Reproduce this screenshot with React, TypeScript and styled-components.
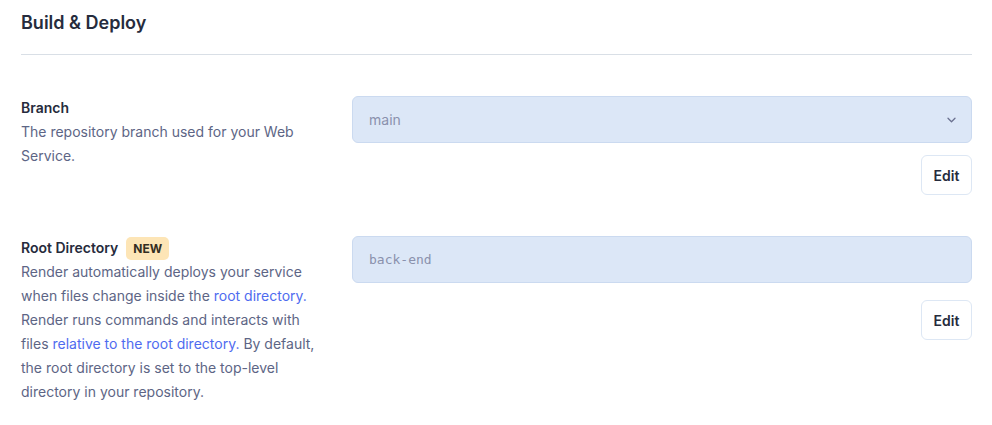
import React from "react";
import styled, { createGlobalStyle } from "styled-components";

const Global = createGlobalStyle`
  html, body { margin: 0; padding: 0; background: #ffffff; }
  body { font-family: Inter, "Noto Sans", sans-serif; -webkit-font-smoothing: antialiased; }
`;

const Page = styled.div`
  padding: 11px 20px 20px 21px;
`;

const Header = styled.div`
  padding-bottom: 19px;
  border-bottom: 1px solid #d9dfe6;
`;

const Title = styled.h2`
  margin: 0;
  font-size: 18px;
  line-height: 24px;
  font-weight: 600;
  color: #262c3d;
`;

const Sections = styled.div`
  display: flex;
  flex-direction: column;
  gap: 41px;
  padding-top: 41px;
`;

const Section = styled.section`
  display: grid;
  grid-template-columns: 310px 1fr;
  column-gap: 21px;
  align-items: start;
`;

const Info = styled.div`
  display: flex;
  flex-direction: column;
`;

const LabelRow = styled.div`
  display: flex;
  align-items: center;
  gap: 8px;
  height: 24px;
`;

const Label = styled.span`
  font-size: 14px;
  font-weight: 600;
  line-height: 24px;
  color: #262b3c;
`;

const Badge = styled.span`
  display: inline-flex;
  align-items: center;
  height: 23px;
  padding: 0 7px;
  border-radius: 5px;
  background: #fde5b6;
  color: #332d22;
  font-size: 12px;
  font-weight: 700;
`;

const Desc = styled.p`
  margin: 0;
  font-size: 14px;
  line-height: 24px;
  color: #5d6585;
`;

const Link = styled.a`
  color: #4f6bef;
  text-decoration: none;
`;

const Control = styled.div<{ $gap: number }>`
  display: flex;
  flex-direction: column;
  align-items: flex-end;
  gap: ${(p) => p.$gap}px;
`;

const Field = styled.div<{ $mono?: boolean }>`
  box-sizing: border-box;
  width: 100%;
  height: 47px;
  display: flex;
  align-items: center;
  justify-content: space-between;
  padding: 0 15px 0 16px;
  background: #dce7f7;
  border: 1px solid #cbdaf0;
  border-radius: 6px;
  color: #8a91ad;
  font-size: ${(p) => (p.$mono ? "13px" : "14px")};
  font-family: ${(p) =>
    p.$mono ? '"DejaVu Sans Mono", "Liberation Mono", monospace' : 'Inter, "Noto Sans", sans-serif'};
`;

const Chevron = styled.svg`
  width: 9px;
  height: 6px;
  color: #6b7190;
`;

const EditButton = styled.button`
  box-sizing: border-box;
  width: 51px;
  height: 40px;
  border: 1px solid #dde7f4;
  border-radius: 6px;
  background: #ffffff;
  color: #262b3c;
  font-family: Inter, "Noto Sans", sans-serif;
  font-size: 14px;
  font-weight: 600;
  cursor: pointer;
  padding: 0;
`;

export default function App() {
  return (
    <>
      <Global />
      <Page>
        <Header>
          <Title>Build &amp; Deploy</Title>
        </Header>
        <Sections>
          <Section>
            <Info>
              <LabelRow>
                <Label>Branch</Label>
              </LabelRow>
              <Desc>The repository branch used for your Web Service.</Desc>
            </Info>
            <Control $gap={12}>
              <Field>
                <span>main</span>
                <Chevron viewBox="0 0 9 6" fill="none">
                  <path d="M1 1.2l3.5 3.5 3.5-3.5" stroke="currentColor" strokeWidth="1.3" strokeLinecap="round" strokeLinejoin="round" />
                </Chevron>
              </Field>
              <EditButton>Edit</EditButton>
            </Control>
          </Section>
          <Section>
            <Info>
              <LabelRow>
                <Label>Root Directory</Label>
                <Badge>NEW</Badge>
              </LabelRow>
              <Desc>
                Render automatically deploys your service when files change inside the{" "}
                <Link href="#">root directory.</Link> Render runs commands and interacts with files{" "}
                <Link href="#">relative to the root directory.</Link> By default, the root directory is set to the
                top-level directory in your repository.
              </Desc>
            </Info>
            <Control $gap={17}>
              <Field $mono>
                <span>back-end</span>
              </Field>
              <EditButton>Edit</EditButton>
            </Control>
          </Section>
        </Sections>
      </Page>
    </>
  );
}
